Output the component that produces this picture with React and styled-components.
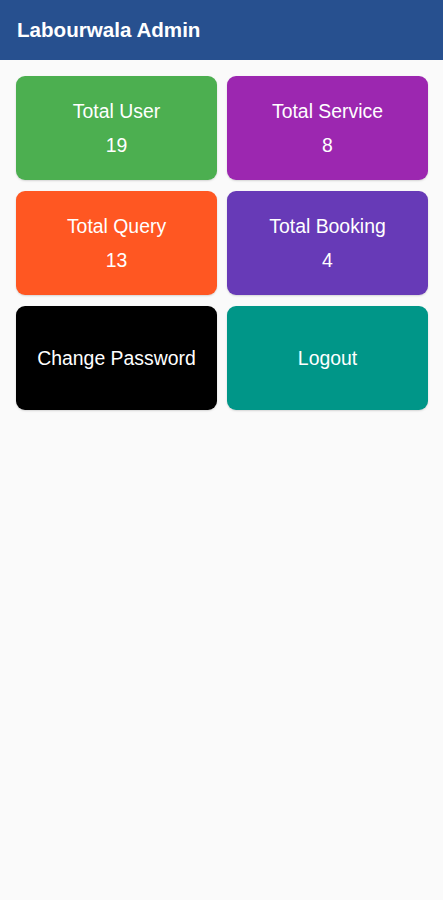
import React from 'react'
import styled, { createGlobalStyle } from 'styled-components'

const GlobalStyle = createGlobalStyle`
body {
  margin: 0;
  background-color: #fafafa;
  font-family: "Liberation Sans", Arial, sans-serif;
}
`

const Page = styled.div`
min-height: 100vh;
background-color: #fafafa;`

const Header = styled.header`
height: 60px;
background-color: #27508f;
display: flex;
align-items: center;
padding: 0 17px;
box-sizing: border-box;`

const Title = styled.h1`
margin: 0;
font-size: 20.6px;
font-weight: 700;
color: white;`

const Grid = styled.div`
display: grid;
grid-template-columns: 1fr 1fr;
column-gap: 10px;
row-gap: 11px;
padding: 16px 15px 0 16px;`

const Card = styled.div`
height: 104px;
border-radius: 9px;
background-color: ${(p) => p.color};
color: white;
display: flex;
flex-direction: column;
align-items: center;
justify-content: center;
gap: 12px;
box-shadow: 0 1px 2px rgba(0, 0, 0, 0.15);
cursor: pointer;`

const Label = styled.div`
font-size: 19.4px;
line-height: 22px;`

const Count = styled.div`
font-size: 19.4px;
line-height: 22px;`

const stats = [
  { label: 'Total User', count: 19, color: '#4caf50' },
  { label: 'Total Service', count: 8, color: '#9c27b0' },
  { label: 'Total Query', count: 13, color: '#ff5722' },
  { label: 'Total Booking', count: 4, color: '#673ab7' },
]

export default function App() {
  return (
    <Page>
      <GlobalStyle />
      <Header>
        <Title>Labourwala Admin</Title>
      </Header>
      <Grid>
        {stats.map((s) => (
          <Card key={s.label} color={s.color}>
            <Label>{s.label}</Label>
            <Count>{s.count}</Count>
          </Card>
        ))}
        <Card color="#000000">
          <Label>Change Password</Label>
        </Card>
        <Card color="#009688">
          <Label>Logout</Label>
        </Card>
      </Grid>
    </Page>
  )
}
